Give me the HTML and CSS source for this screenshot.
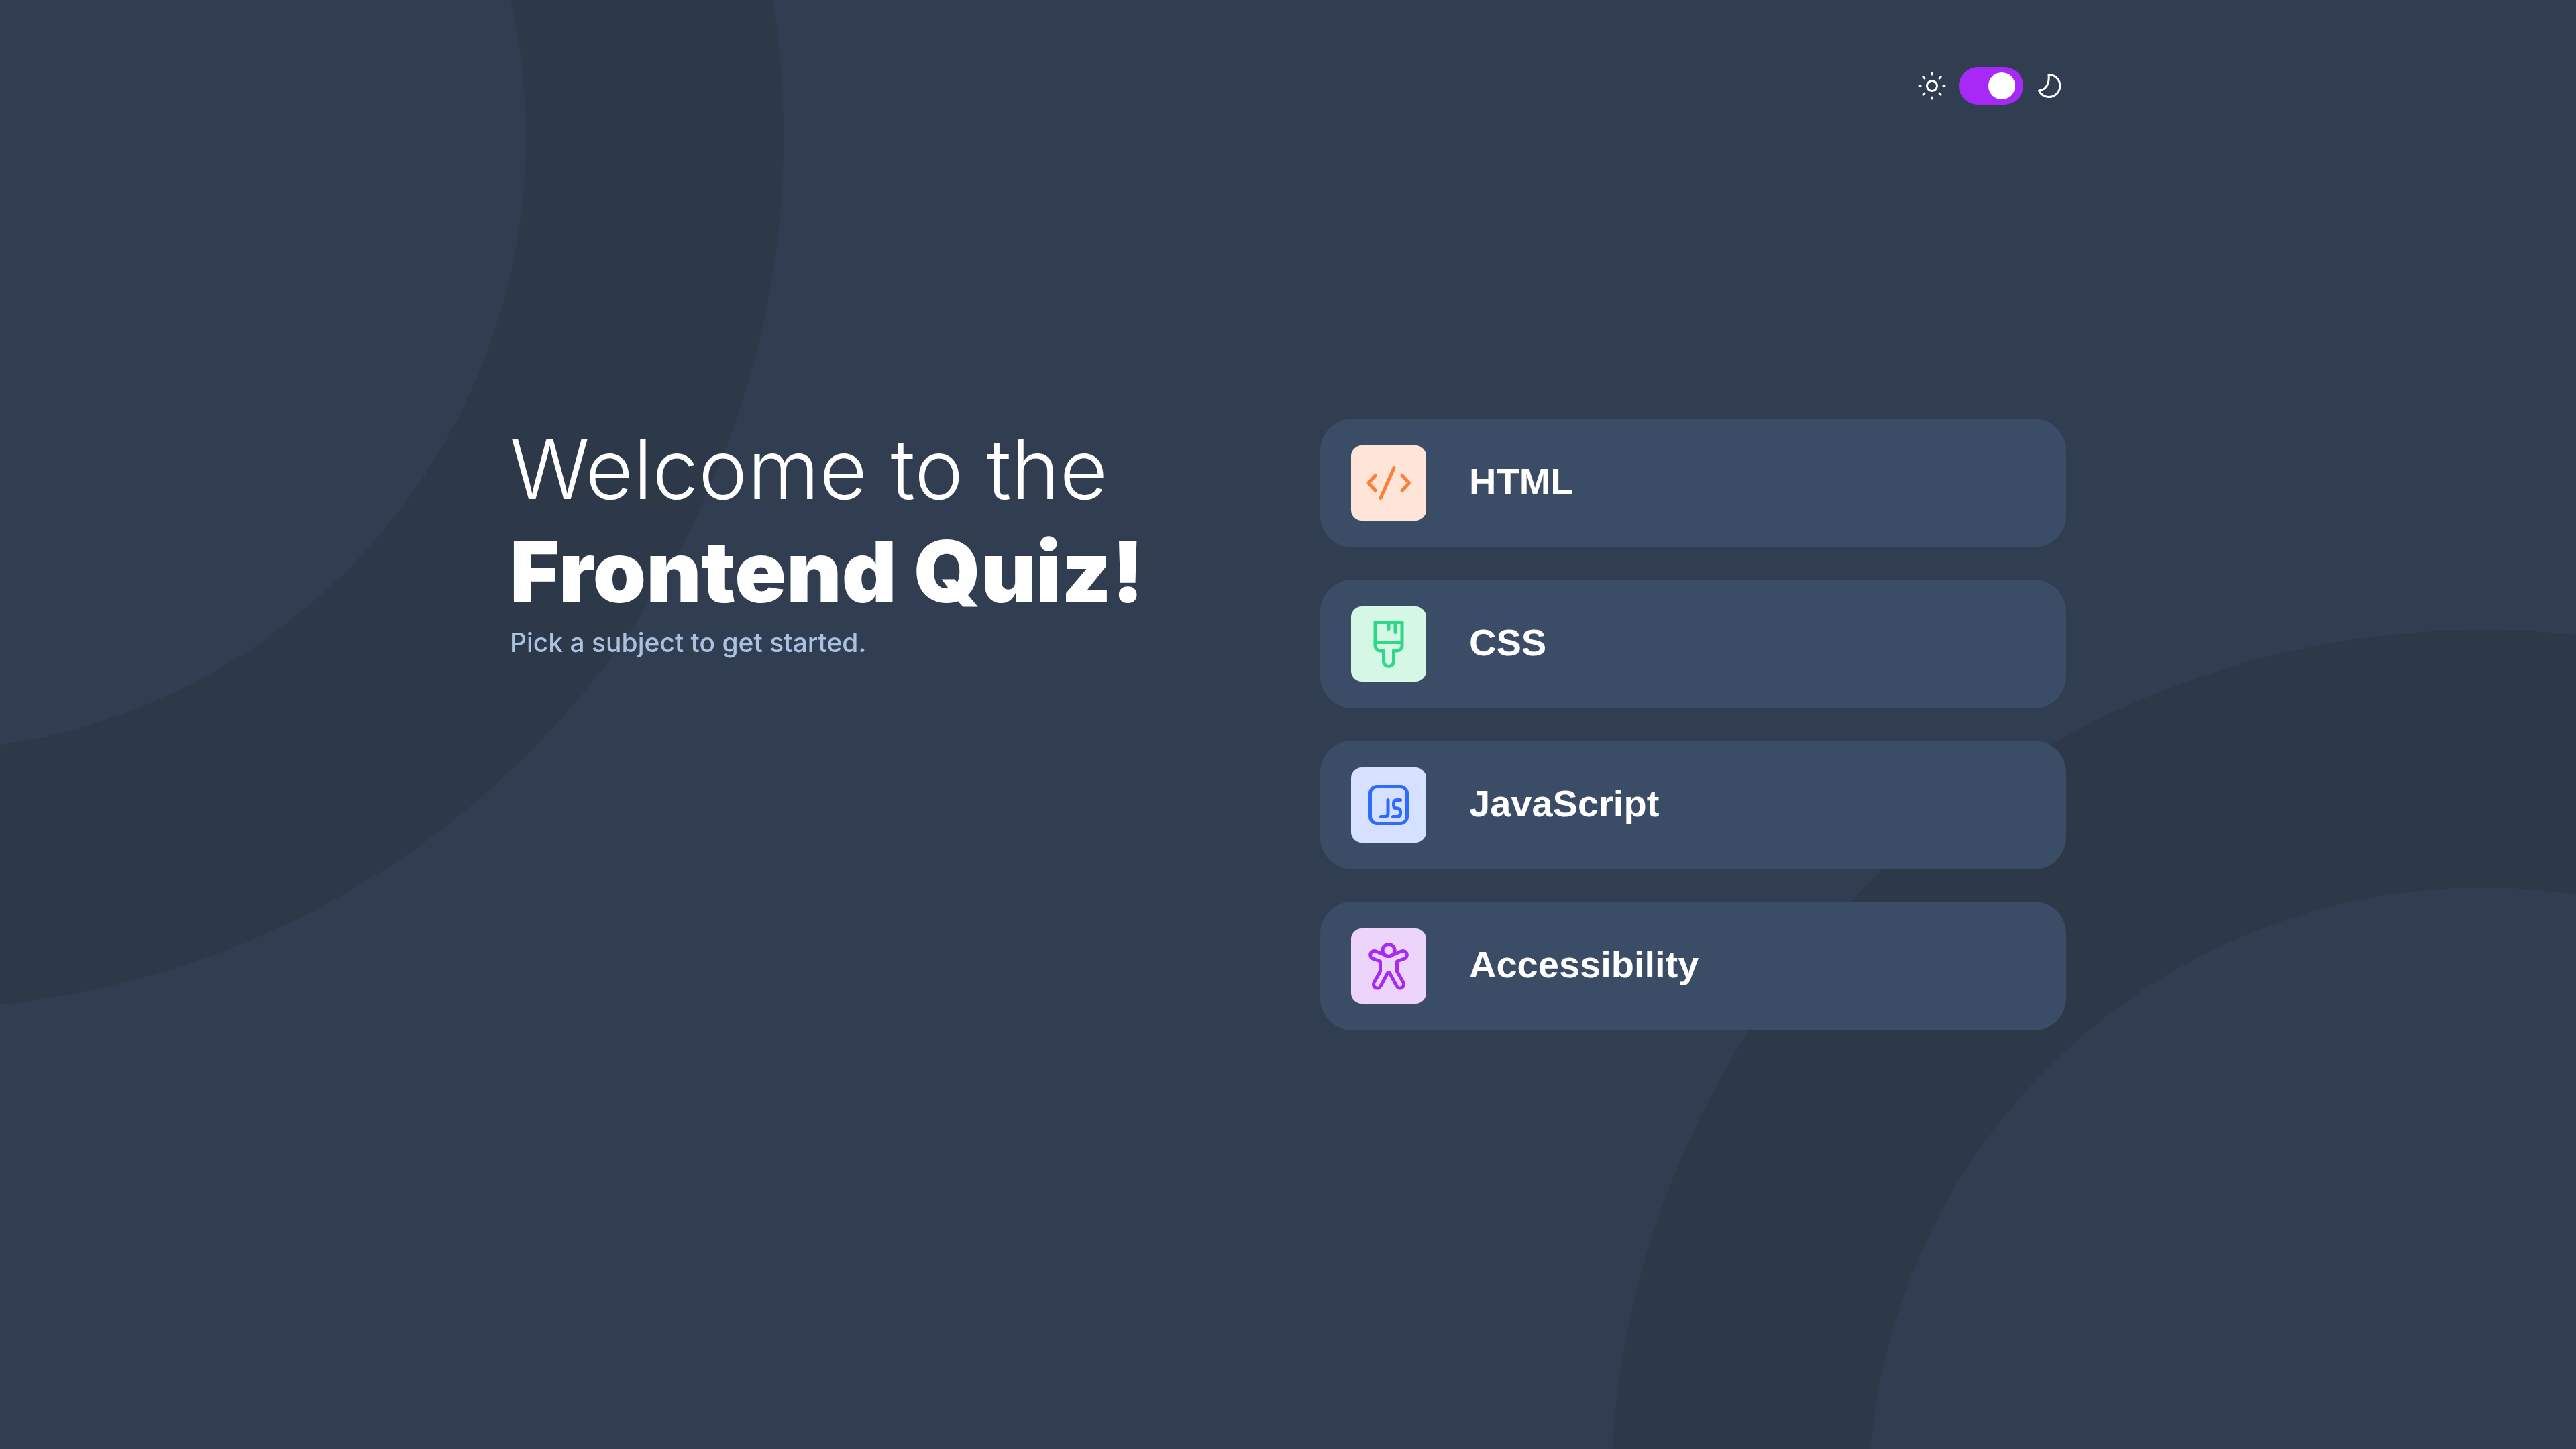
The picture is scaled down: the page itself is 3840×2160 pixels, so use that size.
FILE: index.html
```html
<!DOCTYPE html>
<html lang="en">
<head>
<meta charset="utf-8">
<meta name="viewport" content="width=device-width, initial-scale=1">
<title>Frontend Quiz</title>
<link rel="stylesheet" href="styles.css">
</head>
<body>
<svg class="backdrop" viewBox="0 0 3840 2160" preserveAspectRatio="xMidYMid slice" aria-hidden="true">
  <circle cx="-132" cy="204" r="1108"/>
  <circle cx="3701" cy="2239" r="1108"/>
</svg>
<div class="page">
  <header class="topbar">
    <label class="theme">
      <svg class="theme-icon" viewBox="0 0 48 48" aria-hidden="true">
        <circle cx="24" cy="24" r="7.5"/>
        <path d="M24 5v2M24 41v2M5 24h2M41 24h2M10.800 10.800l2.200 2.200M35 35l2.200 2.200M10.800 37.200l2.200-2.200M35 13l2.200-2.200"/>
      </svg>
      <input class="switch" type="checkbox" role="switch" aria-label="Dark mode" checked>
      <svg class="theme-icon" viewBox="0 0 48 48" aria-hidden="true">
        <path d="M22 7.500a16.500 16.500 0 1 1-14.500 23.500c9.500-1.500 16-8.500 14.500-23.500z"/>
      </svg>
    </label>
  </header>
  <main class="content">
    <section class="intro">
      <h1 class="title">Welcome to the <strong>Frontend Quiz!</strong></h1>
      <p class="hint">Pick a subject to get started.</p>
    </section>
    <section class="subjects" aria-label="Subjects">
      <button class="subject" type="button">
        <svg class="badge badge-html" viewBox="0 0 112 112" aria-hidden="true"><path d="M36.500 44.500 26 56l10.500 11.500M64 33.500 44 78.500M76 44.500 86.500 56 76 67.500"/></svg>
        <span class="subject-name">HTML</span>
      </button>
      <button class="subject" type="button">
        <svg class="badge badge-css" viewBox="0 0 112 112" aria-hidden="true"><path d="M36 23.500h40v35a7.500 7.500 0 0 1-7.500 7.500h-5v16a7.500 7.500 0 0 1-15 0v-16h-5a7.500 7.500 0 0 1-7.500-7.500zM36 53.500h40M56 24v9.500M66 24v14.500"/></svg>
        <span class="subject-name">CSS</span>
      </button>
      <button class="subject" type="button">
        <svg class="badge badge-js" viewBox="0 0 112 112" aria-hidden="true"><rect x="28.500" y="28.500" width="55" height="55" rx="10"/><path d="M55 48.500v20q0 5-5 5h-5.500M73.500 48.500h-5q-5 0-5 5v2.500q0 5 5 5t5 5v2.500q0 5-5 5h-6"/></svg>
        <span class="subject-name">JavaScript</span>
      </button>
      <button class="subject" type="button">
        <svg class="badge badge-a11y" viewBox="0 0 112 112" aria-hidden="true"><circle cx="56" cy="32.500" r="9"/><path d="M49 39 36.500 33.800a6 6 0 0 0-4.500 11.100L43.500 49v15L34 81a5.500 5.500 0 0 0 10 5L54.500 66.500q1.500-2 3 0L68 86a5.500 5.500 0 0 0 10-5L68.500 64V49l11.500-4.100a6 6 0 0 0-4.500-11.100L63 39Q56 44 49 39"/></svg>
        <span class="subject-name">Accessibility</span>
      </button>
    </section>
  </main>
</div>
</body>
</html>
```
FILE: styles.css
```css
* {
  box-sizing: border-box;
}

body {
  margin: 0;
  min-height: 100vh;
  background: #313e51;
  color: #fff;
  font-family: Inter, "Noto Sans", sans-serif;
}

.backdrop {
  position: fixed;
  inset: 0;
  width: 100%;
  height: 100%;
  z-index: -1;
  fill: none;
  stroke: #2d3949;
  stroke-width: 384;
}

.page {
  max-width: 2320px;
  margin: 0 auto;
}

.topbar {
  display: flex;
  justify-content: flex-end;
  padding-top: 100px;
}

.theme {
  display: flex;
  align-items: center;
  gap: 16px;
}

.theme-icon {
  width: 48px;
  height: 48px;
  fill: none;
  stroke: #fff;
  stroke-width: 3;
  stroke-linecap: round;
  stroke-linejoin: round;
}

.switch {
  appearance: none;
  display: flex;
  align-items: center;
  justify-content: flex-end;
  width: 96px;
  height: 56px;
  margin: 0;
  padding: 8px 12px;
  border-radius: 28px;
  background: #a729f5;
}

.switch::before {
  content: "";
  width: 40px;
  height: 40px;
  border-radius: 50%;
  background: #fff;
}

.switch:not(:checked) {
  justify-content: flex-start;
}

.content {
  display: grid;
  grid-template-columns: 1fr 1112px;
  gap: 96px;
  padding-top: 468px;
}

.title {
  margin: 0;
  font-size: 123px;
  line-height: 152px;
  font-weight: 300;
}

.title strong {
  display: block;
  font-size: 127px;
  font-weight: 900;
}

.hint {
  margin: 0;
  color: #abc1e1;
  font-size: 39px;
  line-height: 60px;
  font-weight: 500;
}

.subjects {
  display: flex;
  flex-direction: column;
  gap: 48px;
}

.subject {
  display: flex;
  align-items: center;
  gap: 64px;
  height: 192px;
  padding: 0 46px;
  border: 0;
  border-radius: 48px;
  background: #3b4d66;
  color: #fff;
  font: 700 56px/64px "Liberation Sans", Arial, sans-serif;
  text-align: left;
}

.subject-name {
  padding-bottom: 4px;
}

.badge {
  width: 112px;
  height: 112px;
  border-radius: 16px;
  fill: none;
  stroke-width: 5;
  stroke-linecap: round;
  stroke-linejoin: round;
}

.badge-html {
  background: #ffe5d7;
  stroke: #ff7e35;
}

.badge-css {
  background: #d5f7e5;
  stroke: #2fd887;
}

.badge-js {
  background: #d6e1ff;
  stroke: #306aff;
}

.badge-a11y {
  background: #ecd4fb;
  stroke: #a729f5;
}

@media (max-width: 2300px) {
  .page {
    padding: 0 48px;
  }

  .content {
    grid-template-columns: 1fr;
    padding-top: 96px;
  }
}
```
